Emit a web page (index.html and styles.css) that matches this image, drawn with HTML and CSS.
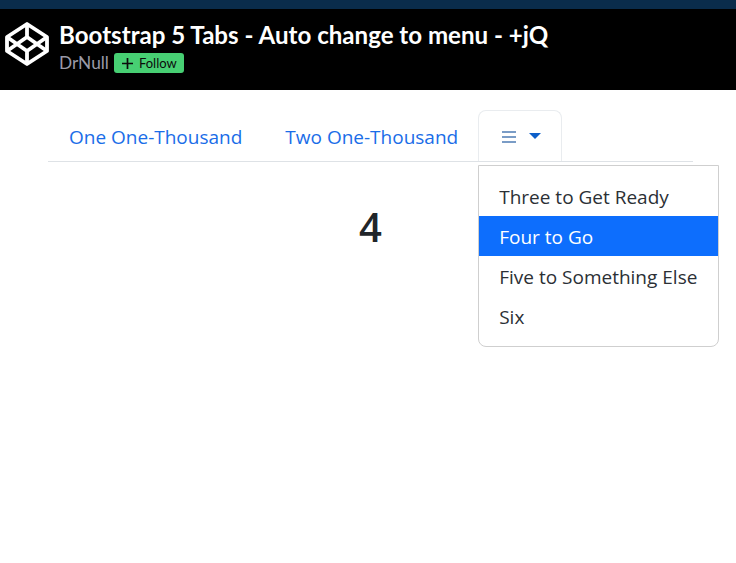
FILE: index.html
```html
<!DOCTYPE html>
<html lang="en">
<head>
<meta charset="utf-8">
<title>Bootstrap 5 Tabs</title>
<link rel="stylesheet" href="styles.css">
</head>
<body>
<header class="site-header">
  <svg class="logo" viewBox="0 0 44 44" width="44" height="44" fill="none" stroke="#fff" stroke-width="3.8" stroke-linejoin="round" aria-hidden="true">
    <path d="M22 2 42 15V29L22 42 2 29V15Z"/>
    <path d="M22 2V15M22 29V42M2 15 22 29 42 15M2 29 22 15 42 29"/>
  </svg>
  <div class="meta">
    <h1 class="title">Bootstrap 5 Tabs - Auto change to menu - +jQ</h1>
    <div class="byline">
      <span class="author">DrNull</span>
      <span class="follow"><svg class="plus" viewBox="0 0 11 11" width="11" height="11" aria-hidden="true"><path d="M5.5 0V11M0 5.5H11" stroke="#0b0b0b" stroke-width="1.7"/></svg>Follow</span>
    </div>
  </div>
</header>
<main class="content">
  <nav class="tabs">
    <a class="tab">One One-Thousand</a>
    <a class="tab tab-second">Two One-Thousand</a>
    <div class="tab-active">
      <svg class="bars" viewBox="0 0 14 12" width="14" height="12" aria-hidden="true"><path d="M0 1H14M0 6H14M0 11H14" stroke="#7a9cc6" stroke-width="2"/></svg>
      <span class="caret"></span>
      <ul class="menu">
        <li class="menu-item">Three to Get Ready</li>
        <li class="menu-item menu-item-active">Four to Go</li>
        <li class="menu-item">Five to Something Else</li>
        <li class="menu-item">Six</li>
      </ul>
    </div>
  </nav>
  <h2 class="pane">4</h2>
</main>
</body>
</html>
```
FILE: styles.css
```css
* { box-sizing: border-box; }
html, body { margin: 0; padding: 0; }
body {
  background: #fff;
  color: #212529;
  font-family: "Open Sans", "Noto Sans", sans-serif;
  font-size: 20px;
  line-height: 30px;
}
.site-header {
  display: flex;
  align-items: flex-start;
  gap: 10px;
  height: 90px;
  padding: 11px 0 0 5px;
  background: #000;
  border-top: 9px solid #0a2c4b;
}
.logo { flex: none; margin-top: 2px; }
.meta { display: flex; flex-direction: column; }
.title {
  margin: 0;
  color: #fff;
  font-family: Lato, sans-serif;
  font-size: 24.1px;
  font-weight: 700;
  line-height: 30px;
}
.byline { display: flex; align-items: center; gap: 5px; height: 24px; margin-top: 1px; }
.author { color: #9a9aa8; font-family: Lato, sans-serif; font-size: 17.3px; line-height: 24px; }
.follow {
  display: inline-flex;
  align-items: center;
  gap: 6px;
  width: 70px;
  height: 20px;
  padding: 0 8px;
  border-radius: 3px;
  background: #47cf73;
  color: #0b0b0b;
  font-family: Lato, sans-serif;
  font-size: 13px;
  line-height: 20px;
}
.plus { flex: none; }
.content { width: 645px; min-height: 473px; margin: 0 0 0 48px; padding-top: 20px; }
.tabs { display: flex; height: 52px; border-bottom: 1px solid #dee2e6; }
.tab {
  display: block;
  flex: none;
  height: 51px;
  padding: 12px 21px 0 21px;
  color: #1a6de8;
  font-size: 19px;
  white-space: nowrap;
}
.tab-second { margin-left: 1px; padding: 12px 20px 0 21px; }
.tab-active {
  position: relative;
  display: flex;
  align-items: center;
  gap: 13px;
  flex: none;
  width: 84px;
  height: 51px;
  padding: 0 0 0 23px;
  border: 1px solid #e9ecef;
  border-bottom: 0;
  border-radius: 8px 8px 0 0;
}
.bars { flex: none; margin-top: 2px; }
.caret {
  width: 0;
  height: 0;
  border-top: 6px solid #0d5fc9;
  border-left: 6px solid transparent;
  border-right: 6px solid transparent;
}
.menu {
  position: absolute;
  top: 54px;
  left: -1px;
  width: 241px;
  margin: 0;
  padding: 10px 0;
  list-style: none;
  background: #fff;
  border: 1px solid #cfcfcf;
  border-radius: 0 0 8px 8px;
}
.menu-item { height: 40px; padding: 6px 20px 0; color: #2b3035; font-size: 19px; white-space: nowrap; }
.menu-item-active { background: #0d6efd; color: #fff; }
.pane { margin: 0; padding-top: 41px; text-align: center; font-size: 40px; font-weight: 600; line-height: 48px; }
```
